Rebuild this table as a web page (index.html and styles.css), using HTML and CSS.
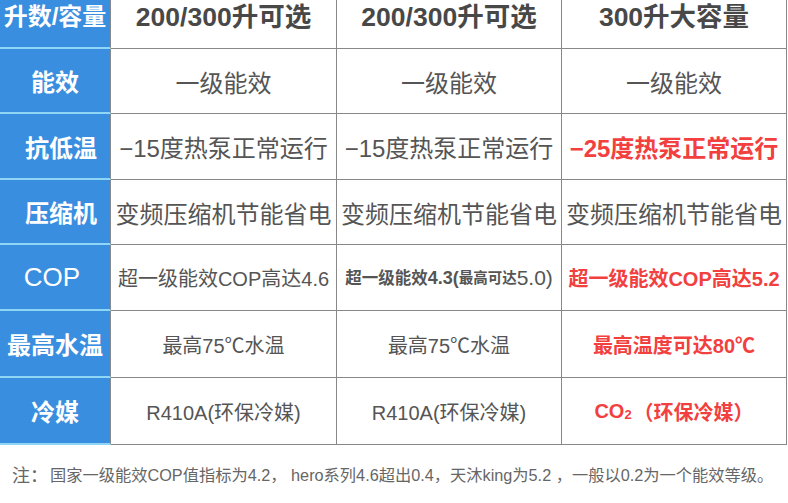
FILE: index.html
```html
<!DOCTYPE html>
<html lang="zh-CN">
<head>
<meta charset="utf-8">
<title>对比表</title>
<link rel="stylesheet" href="styles.css">
</head>
<body>
<div class="table">
  <div class="lab head-lab">升数/容量</div>
  <div class="cell head">200/300升可选</div>
  <div class="cell head">200/300升可选</div>
  <div class="cell head">300升大容量</div>

  <div class="lab r1">能效</div>
  <div class="cell big r1">一级能效</div>
  <div class="cell big r1">一级能效</div>
  <div class="cell big r1">一级能效</div>

  <div class="lab shift r2">抗低温</div>
  <div class="cell big r2">−15度热泵正常运行</div>
  <div class="cell big r2">−15度热泵正常运行</div>
  <div class="cell big red r2">−25度热泵正常运行</div>

  <div class="lab shift r3">压缩机</div>
  <div class="cell big r3">变频压缩机节能省电</div>
  <div class="cell big r3">变频压缩机节能省电</div>
  <div class="cell big r3">变频压缩机节能省电</div>

  <div class="lab latin r4">COP</div>
  <div class="cell mid r4">超一级能效COP高达4.6</div>
  <div class="cell mixed r4"><span class="m-a">超一级能效</span><span class="m-b">4.3(</span><span class="m-c">最高可达</span><span class="m-d">5.0)</span></div>
  <div class="cell mid red r4">超一级能效COP高达5.2</div>

  <div class="lab r5">最高水温</div>
  <div class="cell mid r5">最高75℃水温</div>
  <div class="cell mid r5">最高75℃水温</div>
  <div class="cell mid red r5">最高温度可达80℃</div>

  <div class="lab r6">冷媒</div>
  <div class="cell mid r6">R410A(环保冷媒)</div>
  <div class="cell mid r6">R410A(环保冷媒)</div>
  <div class="cell mid red r6">CO<span class="sub">2</span>（环保冷媒）</div>
</div>
<p class="note"><span class="note-key">注：</span> 国家一级能效COP值指标为4.2， hero系列4.6超出0.4，天沐king为5.2 ，一般以0.2为一个能效等级。</p>
</body>
</html>
```
FILE: styles.css
```css
* { box-sizing: border-box; }
html, body { margin: 0; padding: 0; background: #fff; }
body {
  width: 788px;
  height: 503px;
  overflow: hidden;
  font-family: "Liberation Sans", "Noto Sans CJK SC", sans-serif;
  color: #555;
}
.table {
  display: grid;
  grid-template-columns: 111px 226px 225px 225px;
  grid-template-rows: 49px 65px 66px 65px 66px 67px 67px;
}
.lab {
  background: #3a8ee0;
  color: #fff;
  font-weight: bold;
  font-size: 24px;
  display: flex;
  align-items: center;
  justify-content: center;
  border-right: 1px solid #888;
  border-bottom: 2px solid #8fd6f6;
  white-space: nowrap;
}
.lab.shift { padding-left: 12px; }
.lab.latin { font-weight: normal; font-size: 26px; padding-right: 6px; }
.head-lab { align-items: flex-start; line-height: 34px; }
.cell {
  display: flex;
  align-items: center;
  justify-content: center;
  border-right: 1px solid #888;
  border-bottom: 1px solid #888;
  white-space: nowrap;
}
.head {
  align-items: flex-start;
  font-size: 26.5px;
  line-height: 34px;
  font-weight: bold;
  color: #484848;
}
.big { font-size: 24px; }
.mid { font-size: 20px; }
.red { color: #f2403f; font-weight: bold; }
.mixed { font-weight: bold; color: #555; padding-top: 21px; align-items: flex-start; }
.mixed span { display: inline-block; }
.m-a { font-size: 16.5px; line-height: 24px; }
.m-b { font-size: 18px; line-height: 24px; }
.m-c { font-size: 14.5px; line-height: 24px; }
.m-d { font-size: 21px; line-height: 24px; font-weight: normal; }
.sub { font-size: 13px; position: relative; top: 3px; margin-right: 2px; }
.note {
  margin: 0;
  height: 58px;
  padding-left: 12px;
  display: flex;
  align-items: center;
  font-size: 16.25px;
  color: #666;
  white-space: nowrap;
}
.note-key { font-size: 18px; margin-right: 2px; }
```
